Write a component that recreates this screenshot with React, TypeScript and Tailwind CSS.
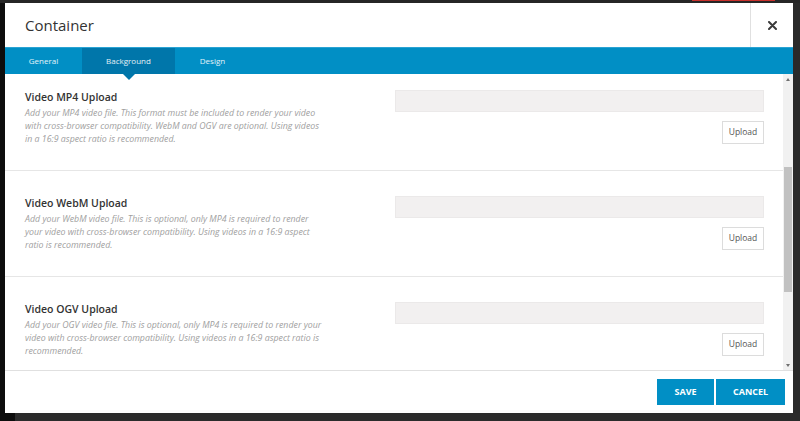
import React from 'react';

const sections = [
    {
        title: 'Video MP4 Upload',
        desc: 'Add your MP4 video file. This format must be included to render your video with cross-browser compatibility. WebM and OGV are optional. Using videos in a 16:9 aspect ratio is recommended.',
    },
    {
        title: 'Video WebM Upload',
        desc: 'Add your WebM video file. This is optional, only MP4 is required to render your video with cross-browser compatibility. Using videos in a 16:9 aspect ratio is recommended.',
    },
    {
        title: 'Video OGV Upload',
        desc: 'Add your OGV video file. This is optional, only MP4 is required to render your video with cross-browser compatibility. Using videos in a 16:9 aspect ratio is recommended.',
    },
];

const tabs = [
    { name: 'General', width: 'w-[77px]' },
    { name: 'Background', width: 'w-[93px]' },
    { name: 'Design', width: 'w-[75px]' },
];

const App = () => {
    return (
        <div className="w-[800px] h-[421px] bg-[#262626] flex flex-col overflow-hidden font-['Open_Sans',sans-serif]">
            {/* top strip */}
            <div className="h-[3px] flex shrink-0">
                <div className="w-[692px]"></div>
                <div className="w-[83px] h-[1px] bg-[#c8302c]"></div>
            </div>

            <div className="flex flex-1">
                <div className="w-[5px] bg-[#0d0d0d]"></div>

                {/* Modal */}
                <div className="w-[788px] h-[410px] bg-white flex flex-col">
                    {/* Header */}
                    <div className="h-[44px] flex shrink-0">
                        <div className="flex-1 flex items-center pl-[20px] text-[15px] text-[#333]">Container</div>
                        <div className="w-[43px] border-l border-[#e0e0e0] flex items-center justify-center">
                            <svg width="9" height="9" viewBox="0 0 9 9">
                                <path d="M1 1L8 8M8 1L1 8" stroke="#3a3a3a" strokeWidth="2" strokeLinecap="round" />
                            </svg>
                        </div>
                    </div>

                    {/* Tabs */}
                    <div className="h-[27px] bg-[#018fc5] border-t border-[#2aa3d3] flex shrink-0 relative z-10">
                        {tabs.map((tab) => (
                            <div
                                key={tab.name}
                                className={
                                    tab.name === 'Background'
                                        ? `relative ${tab.width} flex items-center justify-center bg-[#0076aa] text-[8px] text-white/90`
                                        : `relative ${tab.width} flex items-center justify-center text-[8px] text-white/90`
                                }
                            >
                                {tab.name}
                                {tab.name === 'Background' && (
                                    <div className="absolute top-full left-1/2 -translate-x-1/2 w-0 h-0 border-l-[6px] border-r-[6px] border-t-[6px] border-l-transparent border-r-transparent border-t-[#0076aa]"></div>
                                )}
                            </div>
                        ))}
                    </div>

                    {/* Content */}
                    <div className="h-[296px] flex shrink-0">
                        <div className="flex-1 overflow-hidden">
                            <div className="-mt-[9px]">
                                {sections.map((s) => (
                                    <div key={s.title} className="h-[106px] border-b border-[#e6e6e6] pt-[25px] pl-[20px] pr-[19px] flex justify-between">
                                        <div className="w-[298px]">
                                            <div className="text-[10.5px] leading-[14px] font-semibold text-[#333]">{s.title}</div>
                                            <div className="mt-[2.5px] text-[8.8px] leading-[13px] italic text-[#a0a0a0]">{s.desc}</div>
                                        </div>
                                        <div className="w-[369px] flex flex-col">
                                            <div className="h-[22px] bg-[#f2f0f0] border border-[#ebe9e9]"></div>
                                            <button className="mt-[9px] self-end h-[23px] w-[42px] bg-white border border-[#dcdcdc] text-[8.5px] text-[#555]">
                                                Upload
                                            </button>
                                        </div>
                                    </div>
                                ))}
                            </div>
                        </div>

                        {/* Scrollbar */}
                        <div className="w-[10px] bg-[#f1f1f1] flex flex-col items-center">
                            <div className="h-[10px] flex items-center justify-center">
                                <div className="w-0 h-0 border-l-[2.5px] border-r-[2.5px] border-b-[3px] border-l-transparent border-r-transparent border-b-[#707070]"></div>
                            </div>
                            <div className="flex-1 w-full px-[1px] pt-[83px]">
                                <div className="h-[125px] bg-[#c1c1c1]"></div>
                            </div>
                            <div className="h-[10px] flex items-center justify-center">
                                <div className="w-0 h-0 border-l-[2.5px] border-r-[2.5px] border-t-[3px] border-l-transparent border-r-transparent border-t-[#707070]"></div>
                            </div>
                        </div>
                    </div>

                    {/* Footer */}
                    <div className="flex-1 border-t border-[#e0e0e0] flex justify-end items-start pt-[8px] pr-[8px] gap-[2px]">
                        <button className="w-[57px] h-[26px] bg-[#018fc5] text-white text-[9px] font-bold">SAVE</button>
                        <button className="w-[69px] h-[26px] bg-[#018fc5] text-white text-[9px] font-bold">CANCEL</button>
                    </div>
                </div>

                <div className="flex-1 bg-[#2a2a2a]"></div>
            </div>

            {/* bottom strip */}
            <div className="h-[8px] flex shrink-0">
                <div className="w-[15px] bg-[#0d0d0d]"></div>
                <div className="flex-1 bg-[#2b2b2b]"></div>
            </div>
        </div>
    );
};

export default App;
